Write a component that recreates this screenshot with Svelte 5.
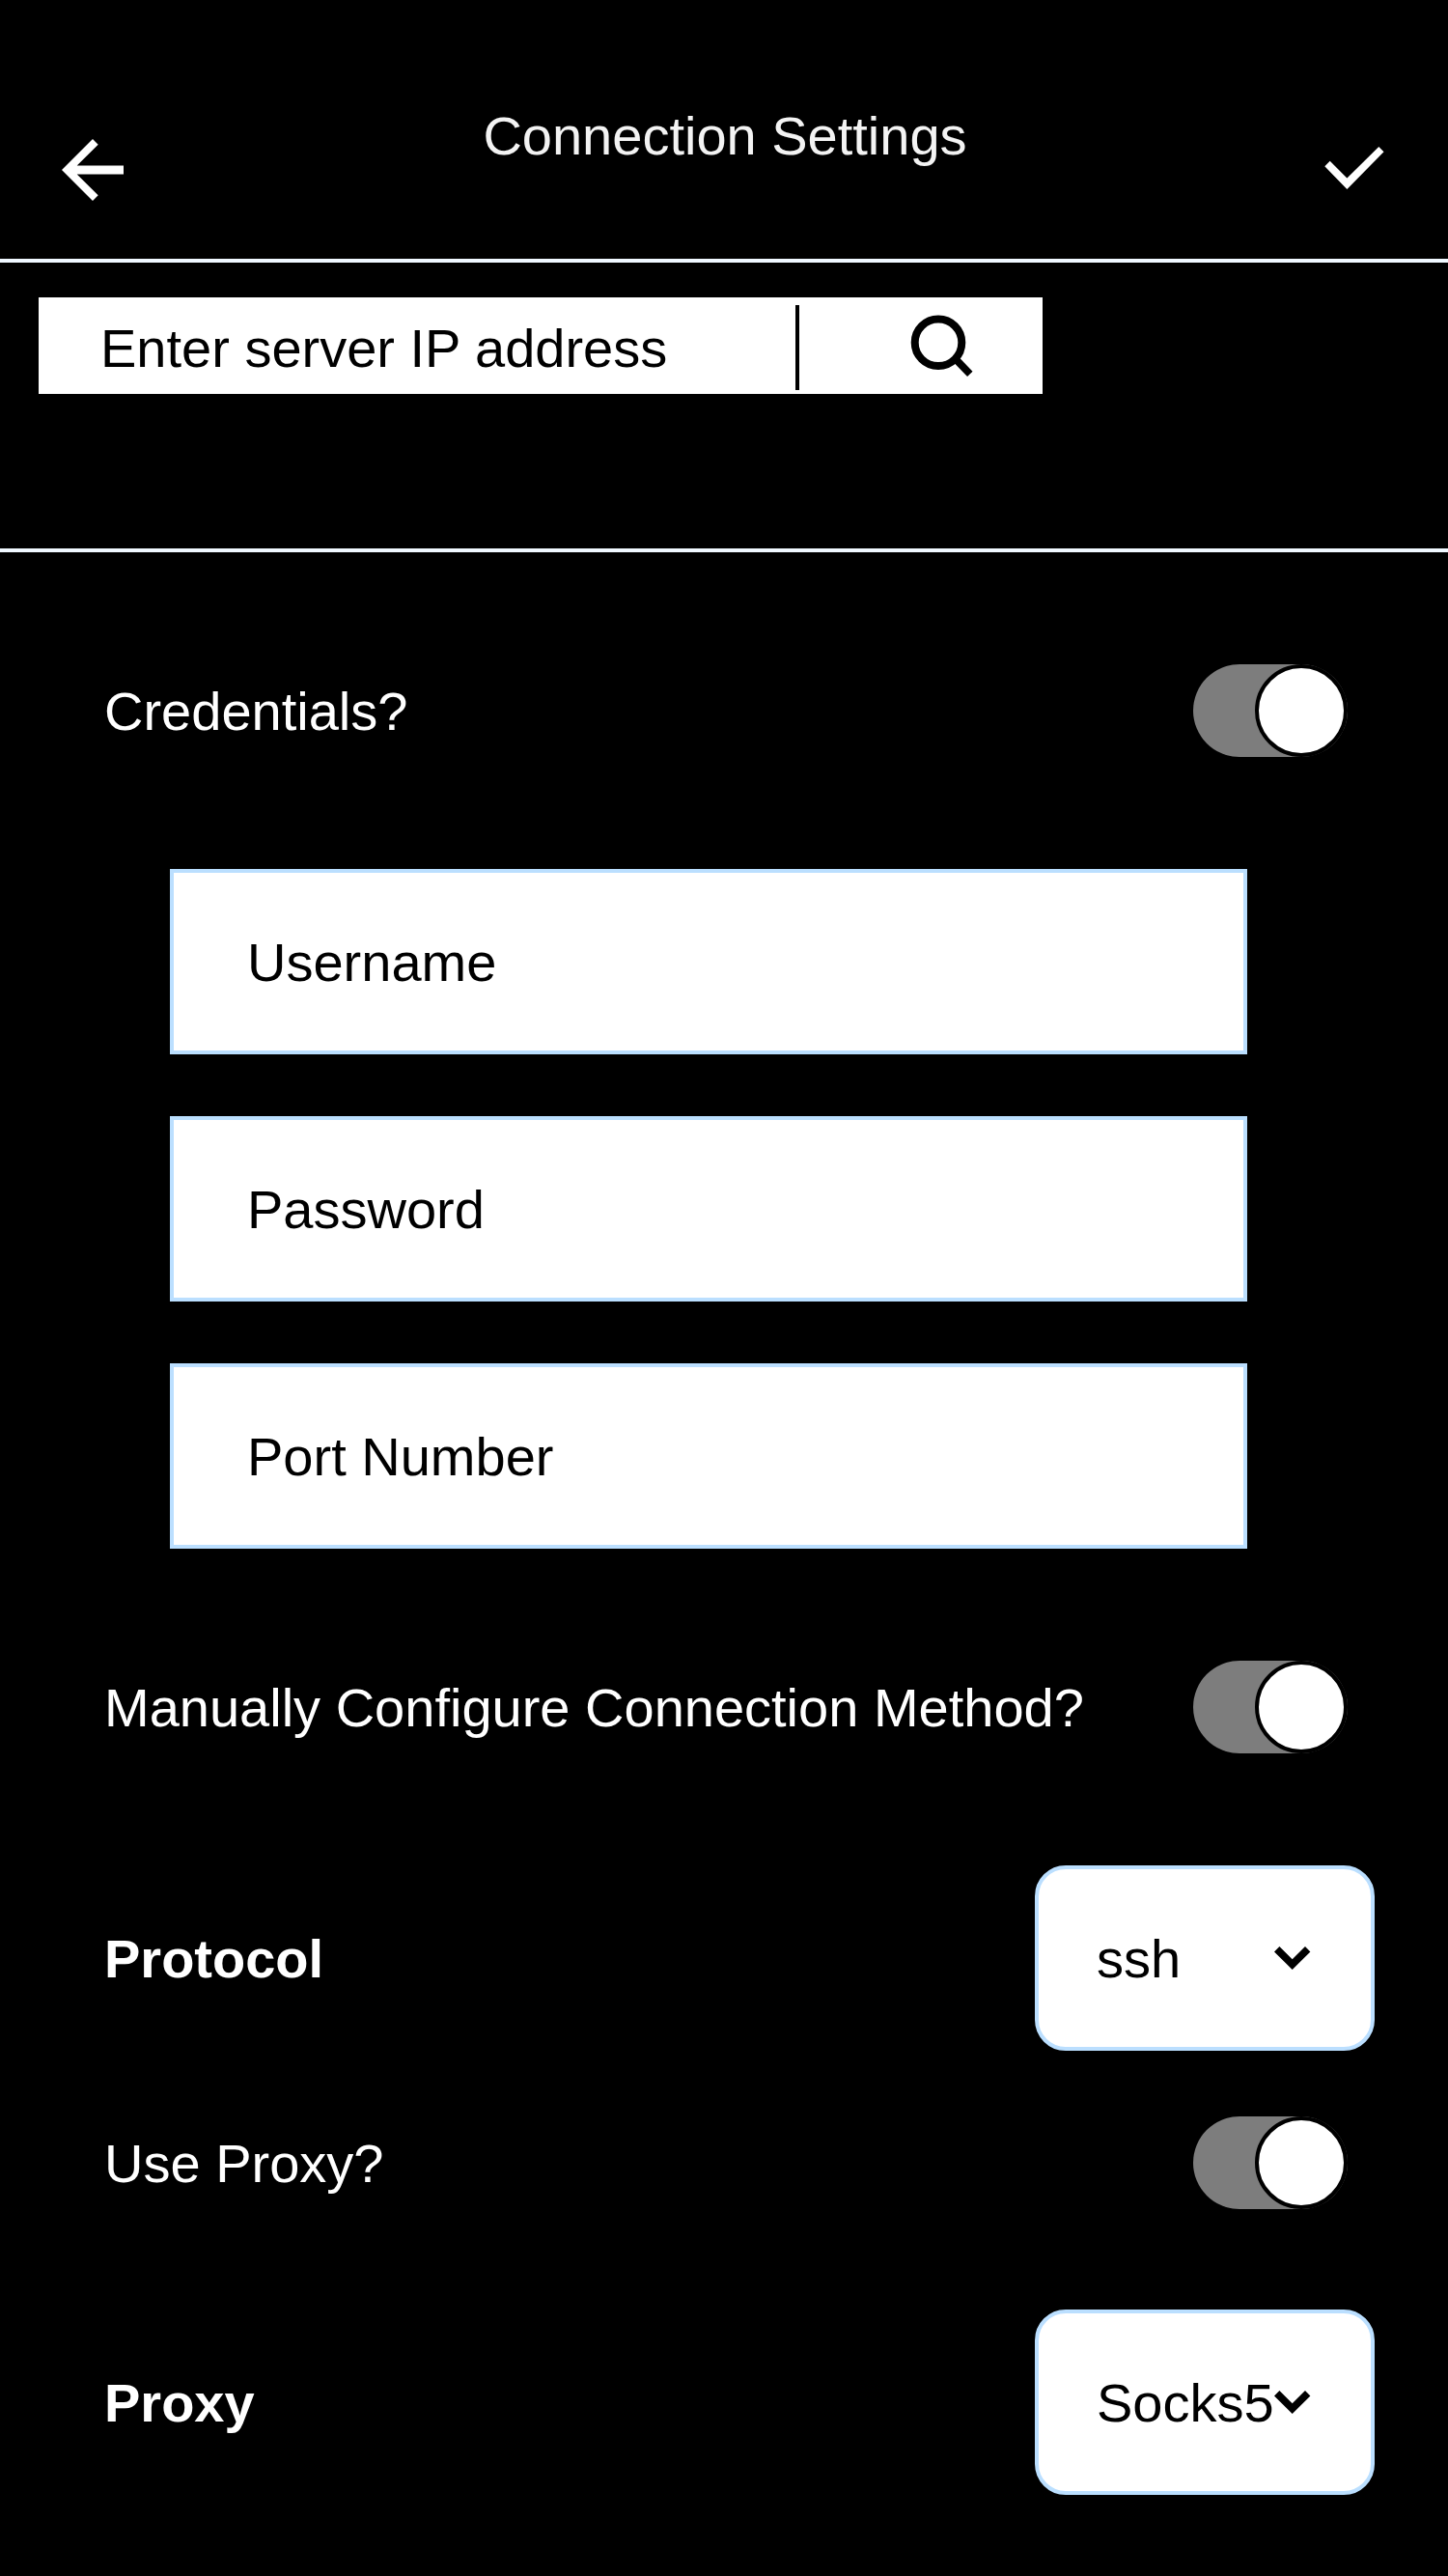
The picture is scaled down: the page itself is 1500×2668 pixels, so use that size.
<script>
  let credentials = $state(true);
  let manual = $state(true);
  let proxy = $state(true);
  const fields = ['Username', 'Password', 'Port Number'];
</script>

{#snippet toggle(on, label, flip)}
  <button class="toggle" class:on role="switch" aria-checked={on} aria-label={label} onclick={flip}>
    <span class="knob"></span>
  </button>
{/snippet}

{#snippet select(value)}
  <button class="select">
    <span class="value">{value}</span>
    <svg class="chevron" width="38" height="24" viewBox="0 0 38 24">
      <path d="M0 5.4 5.4 0 18.7 13.3 32 0 37.4 5.4 18.7 24Z" fill="#000" />
    </svg>
  </button>
{/snippet}

<main class="screen">
  <header class="header">
    <button class="icon back" aria-label="Back">
      <svg width="64" height="64" viewBox="0 0 64 64">
        <path d="M32 0 37.7 5.7 15.7 27.6H64V36.4H15.7L37.7 58.3 32 64 0 32Z" fill="#fff" />
      </svg>
    </button>
    <h1 class="title">Connection Settings</h1>
    <button class="icon done" aria-label="Done">
      <svg width="62" height="44" viewBox="0 0 62 44">
        <path d="M0.3 20.2 5.7 14.8 23.4 32.4 56.3 0 61.5 5.3 23.4 44Z" fill="#fff" />
      </svg>
    </button>
  </header>

  <section class="search">
    <div class="search-box">
      <span class="search-text">Enter server IP address</span>
      <span class="divider"></span>
      <svg class="search-icon" width="66" height="66" viewBox="0 0 66 66">
        <circle cx="30" cy="29.8" r="24.3" fill="none" stroke="#000" stroke-width="8" />
        <path d="M47.5 46.5 62.8 62.3" stroke="#000" stroke-width="7.6" />
      </svg>
    </div>
  </section>

  <section class="body">
    <div class="row">
      <span class="label">Credentials?</span>
      {@render toggle(credentials, 'Credentials', () => (credentials = !credentials))}
    </div>
    <div class="fields">
      {#each fields as field}
        <div class="field">{field}</div>
      {/each}
    </div>
    <div class="row">
      <span class="label">Manually Configure Connection Method?</span>
      {@render toggle(manual, 'Manual configuration', () => (manual = !manual))}
    </div>
    <div class="row choice protocol">
      <strong class="label">Protocol</strong>
      {@render select('ssh')}
    </div>
    <div class="row">
      <span class="label">Use Proxy?</span>
      {@render toggle(proxy, 'Use proxy', () => (proxy = !proxy))}
    </div>
    <div class="row choice proxy">
      <strong class="label">Proxy</strong>
      {@render select('Socks5')}
    </div>
  </section>
</main>

<style>
  :global(body) {
    margin: 0;
    background: #000;
  }
  .screen {
    box-sizing: border-box;
    width: 1500px;
    height: 2668px;
    background: #000;
    color: #fff;
    font: 56px/64px Arial, 'Liberation Sans', sans-serif;
    overflow: hidden;
  }
  button {
    margin: 0;
    padding: 0;
    border: 0;
    background: none;
    color: inherit;
    font: inherit;
    text-align: left;
  }
  svg {
    display: block;
    flex: none;
  }
  .header {
    box-sizing: border-box;
    display: grid;
    grid-template-columns: 64px 1fr 62px;
    align-items: start;
    height: 272px;
    padding: 0 66px 0 64px;
    border-bottom: 4px solid #f0f8ff;
  }
  .back {
    margin-top: 144px;
  }
  .done {
    margin-top: 152px;
  }
  .title {
    margin: 109px 0 0;
    padding-left: 2px;
    color: #f3f3f3;
    font-size: 56px;
    font-weight: 400;
    text-align: center;
  }
  .search {
    box-sizing: border-box;
    height: 300px;
    padding: 36px 40px;
    border-bottom: 4px solid #f0f8ff;
  }
  .search-box {
    box-sizing: border-box;
    display: flex;
    align-items: center;
    width: 1040px;
    height: 100px;
    padding: 0 70px 0 64px;
    background: #fff;
    color: #000;
  }
  .search-text {
    width: 720px;
    padding-top: 6px;
  }
  .divider {
    width: 4px;
    height: 88px;
    margin-top: 4px;
    background: #000;
  }
  .search-icon {
    margin-left: 114px;
  }
  .body {
    padding: 116px 76px 0 108px;
  }
  .row {
    display: flex;
    align-items: center;
    justify-content: space-between;
    height: 96px;
    padding-right: 28px;
  }
  .row.choice {
    height: 192px;
    padding-right: 0;
  }
  .label,
  .value {
    padding-top: 2px;
  }
  .protocol {
    margin: 116px 0 68px;
  }
  .proxy {
    margin-top: 104px;
  }
  .toggle {
    display: flex;
    width: 160px;
    height: 96px;
    border-radius: 48px;
    background: #7d7d7d;
  }
  .toggle.on {
    justify-content: flex-end;
  }
  .knob {
    box-sizing: border-box;
    width: 96px;
    height: 96px;
    border: 4px solid #000;
    border-radius: 50%;
    background: #fff;
  }
  .fields {
    display: flex;
    flex-direction: column;
    gap: 64px;
    width: 1116px;
    margin: 116px 0 116px 68px;
  }
  .field {
    box-sizing: border-box;
    display: flex;
    align-items: center;
    height: 192px;
    padding: 2px 0 0 76px;
    border: 4px solid #bbdfff;
    background: #fff;
    color: #000;
  }
  .select {
    box-sizing: border-box;
    display: flex;
    align-items: center;
    width: 352px;
    height: 192px;
    padding-left: 60px;
    border: 4px solid #bbdfff;
    border-radius: 32px;
    background: #fff;
    color: #000;
  }
  .value {
    width: 184px;
    white-space: nowrap;
  }
</style>
